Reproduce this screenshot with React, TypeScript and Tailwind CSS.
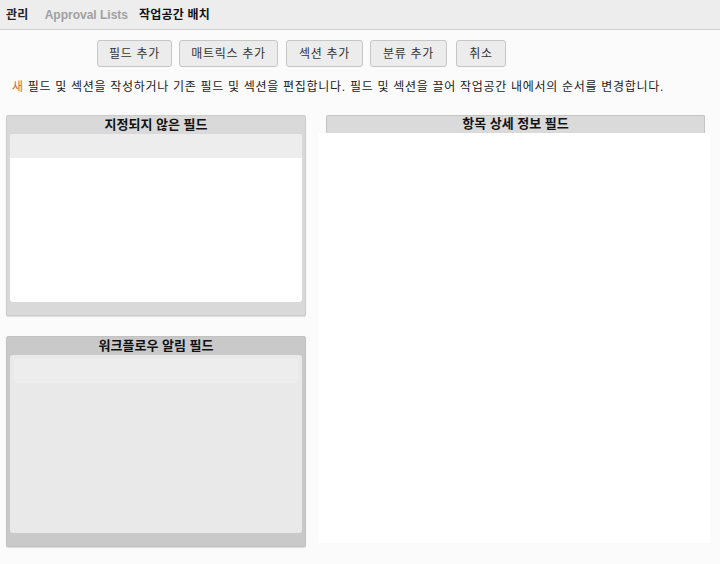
import React from 'react';

const font = { fontFamily: '"Liberation Sans", "Noto Sans CJK KR", sans-serif' };

const buttons = [
  { label: '필드 추가', cls: 'w-[75px]' },
  { label: '매트릭스 추가', cls: 'w-[99px] ml-[7px]' },
  { label: '섹션 추가', cls: 'w-[77px] ml-[8px]' },
  { label: '분류 추가', cls: 'w-[77px] ml-[7px]' },
  { label: '취소', cls: 'w-[50px] ml-[9px]' },
];

const App: React.FC = () => {
  return (
    <div className="w-[720px] h-[564px] bg-[#fbfbfb] overflow-hidden text-[#222]" style={font}>
      {/* Top nav */}
      <div className="h-[30px] bg-[#ededed] border-b border-[#cfcfcf] flex items-center pl-[6px] text-[12px] font-bold">
        <span className="text-[#222] tracking-[0.3px]">관리</span>
        <span className="ml-[16px] text-[#a0a0a0]">Approval Lists</span>
        <span className="ml-[11px] text-[#111] tracking-[0.2px]">작업공간 배치</span>
      </div>

      {/* Toolbar */}
      <div className="flex items-center pl-[97px] mt-[10px]">
        {buttons.map((b) => (
          <button
            key={b.label}
            className={`h-[27px] bg-[#ececec] border border-[#c6c6c6] rounded-[3px] text-[12px] tracking-[0.7px] text-[#333] ${b.cls}`}
          >
            {b.label}
          </button>
        ))}
      </div>

      <p className="mt-[12px] pl-[12px] text-[12px] leading-[16px] text-[#222] tracking-[0.7px] whitespace-nowrap">
        <span className="text-[#d2691e]">새</span> 필드 및 섹션을 작성하거나 기존 필드 및 섹션을 편집합니다. 필드 및 섹션을 끌어 작업공간 내에서의 순서를 변경합니다.
      </p>

      {/* Main area */}
      <div className="flex pl-[6px] mt-[20px]">
        <div className="w-[300px] flex flex-col">
          <div className="h-[201px] bg-[#d9d9d9] border border-[#cbcbcb] rounded-[2px] shadow-[0_1px_1px_rgba(0,0,0,0.12)] flex flex-col px-[3px]">
            <div className="h-[18px] text-center text-[13px] font-bold leading-[17px] text-[#111]">지정되지 않은 필드</div>
            <div className="h-[168px] bg-white rounded-[3px] overflow-hidden">
              <div className="h-[24px] bg-[#ededed]" />
            </div>
          </div>
          <div className="mt-[20px] h-[211px] bg-[#c9c9c9] border border-[#c2c2c2] rounded-[2px] shadow-[0_1px_1px_rgba(0,0,0,0.12)] flex flex-col px-[3px]">
            <div className="h-[18px] text-center text-[13px] font-bold leading-[17px] text-[#111]">워크플로우 알림 필드</div>
            <div className="h-[178px] bg-[#e9e9e9] rounded-[3px] pt-[4px] px-[4px]">
              <div className="h-[24px] bg-[#ededed] rounded-[2px]" />
            </div>
          </div>
        </div>

        <div className="ml-[12px] w-[392px] flex flex-col">
          <div className="ml-[8px] mr-[5px] h-[18px] bg-[#dadada] border border-[#c4c4c4] border-b-0 rounded-t-[2px] text-center text-[13px] font-bold leading-[16px] text-[#111]">
            항목 상세 정보 필드
          </div>
          <div className="h-[410px] bg-white" />
        </div>
      </div>
    </div>
  );
};

export default App;
